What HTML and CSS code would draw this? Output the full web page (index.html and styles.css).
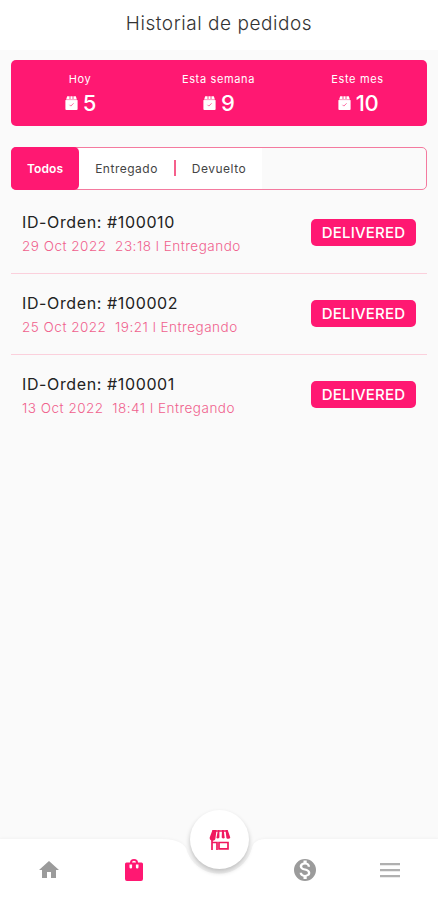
FILE: index.html
```html
<!DOCTYPE html>
<html lang="es">

<head>
    <meta charset="UTF-8">
    <meta name="viewport" content="width=device-width, initial-scale=1.0">
    <title>Historial de pedidos</title>
    <link rel="stylesheet" href="styles.css">
</head>

<body>

    <svg class="defs" width="0" height="0">
        <symbol id="bag" viewBox="0 0 13 14">
            <path fill="#fff" d="M2.200 .3h8.600l1 3H1.200z" />
            <path fill="#fff" d="M.4 4.200L2 3.400h9l1.600.8V13a1 1 0 0 1-1 1H1.400a1 1 0 0 1-1-1z" />
            <path fill="none" stroke="#ff1872" stroke-width=".8" d="M5 0v3M8 0v3" />
            <path fill="none" stroke="#ff6ba4" stroke-width="1" d="M4.500 8.800l1.300 1.300 2.800-2.800" />
            <path fill="none" stroke="#ff9cc2" stroke-width=".6" d="M1 3.700h11" />
        </symbol>
    </svg>

    <header class="header">
        <h1>Historial de pedidos</h1>
    </header>

    <main class="content">
        <section class="summary">
            <div class="stat">
                <span class="stat-label">Hoy</span>
                <div class="stat-value"><svg class="bag"><use href="#bag" /></svg><span>5</span></div>
            </div>
            <div class="stat">
                <span class="stat-label">Esta semana</span>
                <div class="stat-value"><svg class="bag"><use href="#bag" /></svg><span>9</span></div>
            </div>
            <div class="stat">
                <span class="stat-label">Este mes</span>
                <div class="stat-value"><svg class="bag"><use href="#bag" /></svg><span class="ten">10</span></div>
            </div>
        </section>

        <nav class="tabs">
            <a class="tab active">Todos</a>
            <a class="tab entregado">Entregado</a>
            <span class="separator"></span>
            <a class="tab devuelto">Devuelto</a>
        </nav>

        <section class="orders">
            <article class="order">
                <div>
                    <h2>ID-Orden: #100010</h2>
                    <p>29 Oct 2022&nbsp; 23:18 l Entregando</p>
                </div>
                <span class="badge">DELIVERED</span>
            </article>
            <article class="order">
                <div>
                    <h2>ID-Orden: #100002</h2>
                    <p>25 Oct 2022&nbsp; 19:21 l Entregando</p>
                </div>
                <span class="badge">DELIVERED</span>
            </article>
            <article class="order">
                <div>
                    <h2>ID-Orden: #100001</h2>
                    <p>13 Oct 2022&nbsp; 18:41 l Entregando</p>
                </div>
                <span class="badge">DELIVERED</span>
            </article>
        </section>
    </main>

    <footer class="bottom-bar">
        <svg class="bar-shape" viewBox="0 0 438 61">
            <path d="M0 0H160C174 0 182 3 186 9A34 34 0 0 0 252 9C253 4 257 0 266 0H438V61H0z" />
        </svg>
        <div class="items">
            <svg class="icon" viewBox="0 0 24 24"><path d="M10 20v-6h4v6h5v-8h3L12 3 2 12h3v8z" /></svg>
            <svg class="icon selected" viewBox="0 0 24 24"><path fill-rule="evenodd" d="M21 6v15a2 2 0 0 1-2 2H5a2 2 0 0 1-2-2V6a1.500 1.500 0 0 1 1.500-1.500H8a4 3.500 0 0 1 8 0h3.500A1.500 1.500 0 0 1 21 6zM10 4.500h4a2 1.800 0 0 0-4 0zM7.500 6.500v2.700a1.300 1.300 0 0 0 2.600 0V6.500zM13.900 6.500v2.700a1.300 1.300 0 0 0 2.600 0V6.500z" /></svg>
            <span class="icon"></span>
            <svg class="icon" viewBox="0 0 24 24"><path fill-rule="evenodd" d="M12 1a11 11 0 1 0 0 22 11 11 0 0 0 0-22zm1.700 17.600V21h-3.200v-2.300c-2-.4-3.800-1.600-3.900-4h2.400c.1 1.200 1 2.200 3.100 2.200 2.300 0 2.800-1.100 2.800-1.800 0-1-.5-1.900-3.200-2.500-3-.7-5-1.900-5-4.300 0-2 1.700-3.300 3.800-3.800V2.500h3.200v2.300c2.200.5 3.300 2.200 3.400 3.900h-2.400c-.1-1.300-.8-2.200-2.600-2.200-1.800 0-2.900.8-2.900 1.900 0 1 .8 1.600 3.100 2.200s5 1.600 5 4.500c0 2.100-1.600 3.200-3.600 3.500z" /></svg>
            <svg class="icon menu" viewBox="0 0 24 24"><path d="M2 5h20v2.200H2zM2 11h20v2.200H2zM2 17h20v2.200H2z" /></svg>
        </div>
        <div class="store-button">
            <svg width="22" height="20" viewBox="0 0 22 20">
                <path d="M3.500 0h4L6.500 8a2.800 2.800 0 0 1-5.800-.5zM9 0h1.400v7.500a2.300 2.300 0 0 1-3 .5zM13 0h1.700l1 8a2.300 2.300 0 0 1-3-.5zM16.500 0h2.200l2.600 7.500a2.300 2.300 0 0 1-3.900.5z" />
                <path fill="none" stroke="#f0185f" stroke-width="1.700" d="M3.500 1h15M3 9v11M2.500 12.500h5.500V20M10 12.500h9v6.300h-9z" />
            </svg>
        </div>
    </footer>

</body>

</html>
```
FILE: styles.css
```css
body {
    margin: 0;
    height: 900px;
    display: flex;
    flex-direction: column;
    overflow: hidden;
    background: #fafafa;
    font-family: Inter, 'Open Sans', sans-serif;
}

h1,
h2,
p {
    margin: 0;
    font-weight: 400;
    white-space: nowrap;
}

.defs {
    position: absolute;
}

.header {
    height: 50px;
    background: #fff;
    text-align: center;
}

h1 {
    font-size: 19px;
    line-height: 47px;
    letter-spacing: 0.55px;
    font-weight: 300;
    color: #333;
}

.content {
    flex: 1;
    padding: 10px 11px 0;
}

.summary {
    display: grid;
    grid-template-columns: 138px 139px 1fr;
    height: 66px;
    border-radius: 5px;
    background: #ff1872;
    color: #fff;
}

.stat {
    display: flex;
    flex-direction: column;
    align-items: center;
    padding-top: 11px;
}

.stat-label {
    font-size: 11px;
    line-height: 16px;
    letter-spacing: 0.65px;
}

.stat-value {
    display: flex;
    align-items: center;
    gap: 5px;
    height: 32px;
    padding-left: 1px;
    font-size: 22px;
    font-weight: 500;
}

.ten {
    letter-spacing: -0.5px;
}

.bag {
    width: 13px;
    height: 14px;
}

.tabs {
    display: flex;
    align-items: center;
    box-sizing: border-box;
    height: 43px;
    margin-top: 21px;
    border: 1px solid #f47a9f;
    border-radius: 5px;
    font-size: 12px;
    color: #444;
}

.tab {
    display: flex;
    align-items: center;
    justify-content: center;
    height: 41px;
    background: #fff;
    letter-spacing: 0.5px;
}

.active {
    width: 68px;
    height: 43px;
    margin: -1px 0 -1px -1px;
    border-radius: 5px;
    background: #ff1872;
    color: #fff;
    font-weight: 600;
    letter-spacing: 0.1px;
}

.entregado {
    width: 95px;
}

.separator {
    width: 2px;
    height: 16px;
    border: solid #fff;
    border-width: 12px 0 13px;
    background: #f5608c;
}

.devuelto {
    width: 86px;
}

.order {
    display: flex;
    justify-content: space-between;
    align-items: center;
    box-sizing: border-box;
    height: 81px;
    padding: 1px 11px 0;
    border-bottom: 1px solid #fbd0dc;
}

.order:first-child {
    height: 84px;
    padding-top: 4px;
}

.order:last-child {
    border-bottom: none;
    padding-top: 0;
}

h2 {
    font-size: 16px;
    line-height: 25px;
    letter-spacing: 0.62px;
    color: #222;
}

p {
    font-size: 13.5px;
    line-height: 23px;
    letter-spacing: 0.5px;
    font-weight: 300;
    color: #f0618d;
}

.badge {
    width: 105px;
    height: 27px;
    margin-bottom: 2px;
    border-radius: 5px;
    background: #ff1872;
    color: #fff;
    font-size: 15px;
    font-weight: 500;
    letter-spacing: 0.2px;
    line-height: 28px;
    text-align: center;
}

.bottom-bar {
    position: relative;
    height: 61px;
}

.bar-shape {
    display: block;
    width: 438px;
    height: 61px;
    fill: #fff;
    filter: drop-shadow(0 -1px 1px #00000008);
}

.items {
    position: absolute;
    inset: 1px 5px 0 6px;
    display: flex;
    justify-content: space-around;
    align-items: center;
}

.icon {
    width: 24px;
    height: 24px;
    fill: #9b9b9b;
}

.selected {
    fill: #ff1872;
}

.menu {
    fill: #b0b0b0;
}

.store-button {
    position: absolute;
    top: -29px;
    left: 190px;
    display: flex;
    align-items: center;
    justify-content: center;
    width: 59px;
    height: 59px;
    border-radius: 50%;
    background: #fff;
    box-shadow: 0 3px 5px #0000003d;
    fill: #f0185f;
}
```
